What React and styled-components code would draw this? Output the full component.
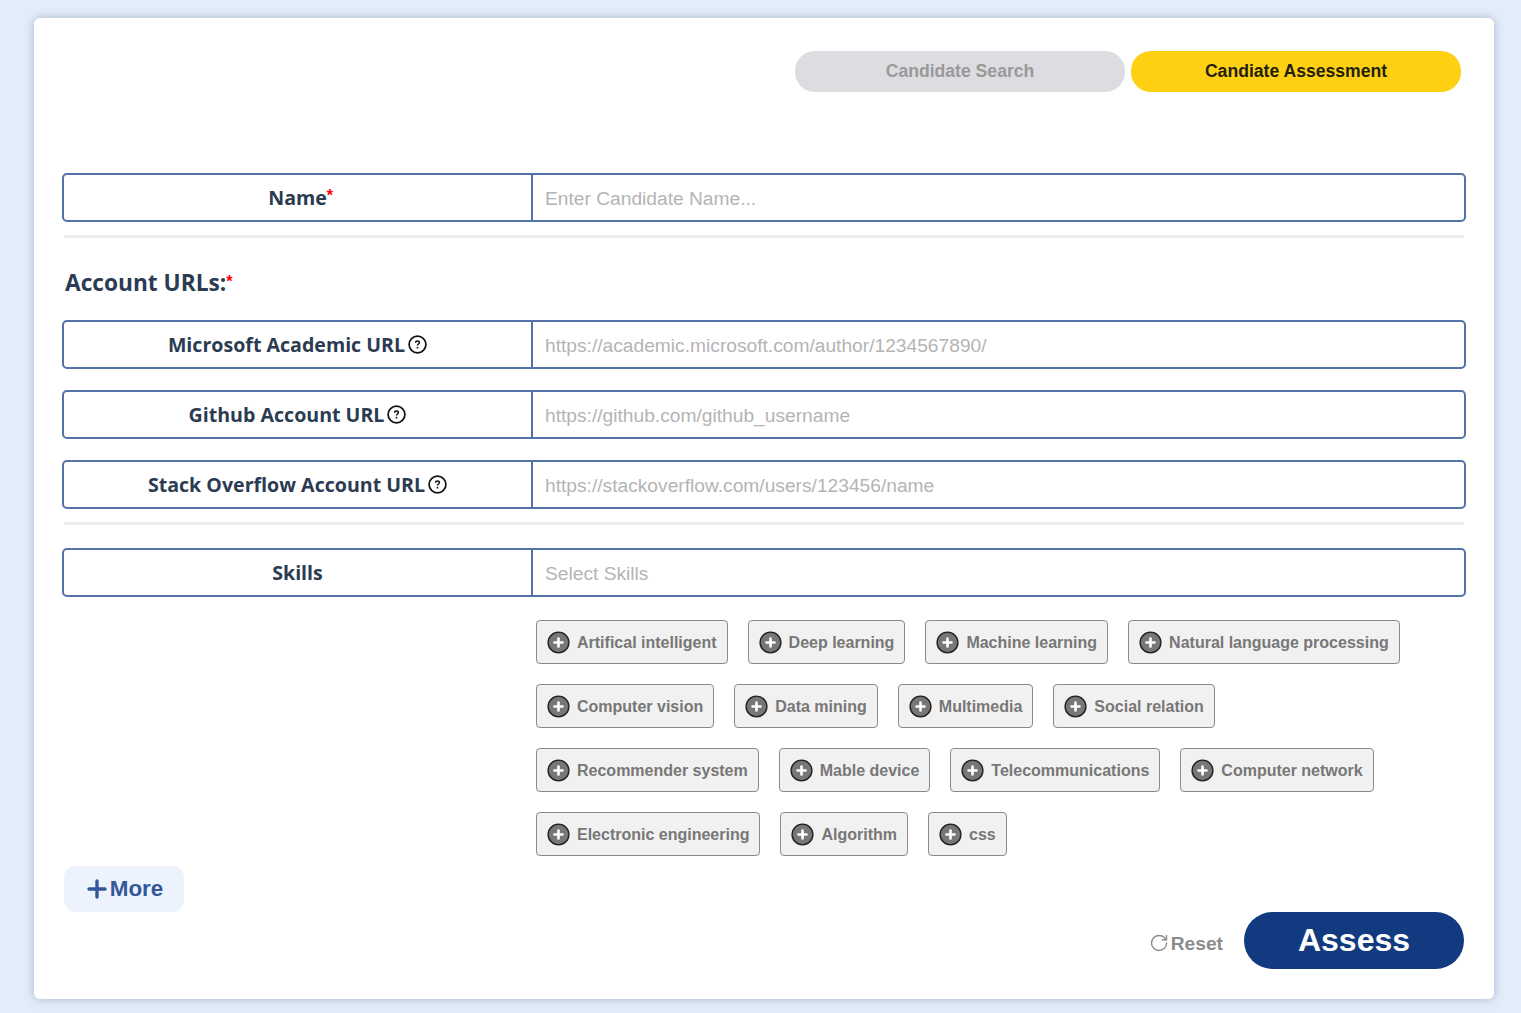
import React from 'react';
import styled, { createGlobalStyle } from 'styled-components';
import { RotateCw } from 'lucide-react';

const GlobalStyle = createGlobalStyle`
  * {
    box-sizing: border-box;
  }
  html, body {
    margin: 0;
    padding: 0;
    background: #e3edf9;
    font-family: "Liberation Sans", Arial, sans-serif;
  }
`;

const Page = styled.div`
  min-height: 1013px;
  padding: 18px 27px 14px 34px;
`;

const Card = styled.div`
  height: 981px;
  padding: 33px 28px 0;
  background: #fff;
  border-radius: 6px;
  box-shadow: 0 0 10px rgba(60, 80, 120, 0.35);
`;

const Nav = styled.div`
  display: flex;
  justify-content: flex-end;
  gap: 6px;
  padding-right: 5px;
  margin-bottom: 81px;
`;

const NavButton = styled.button`
  width: 330px;
  height: 41px;
  padding: 0;
  border: none;
  border-radius: 20px;
  background: ${props => (props.active ? '#ffd011' : '#dcdde0')};
  color: ${props => (props.active ? '#231f10' : '#999')};
  font-family: inherit;
  font-size: 17.6px;
  font-weight: 700;
`;

const Row = styled.div`
  display: flex;
  height: 49px;
  margin-bottom: ${props => props.gap || 21}px;
  border: 2px solid #5272a8;
  border-radius: 5px;
`;

const RowLabel = styled.label`
  display: flex;
  align-items: center;
  justify-content: center;
  flex: none;
  width: 469px;
  border-right: 2px solid #5272a8;
  color: #2b3b52;
  font-family: "Open Sans", "Noto Sans", sans-serif;
  font-size: 19.6px;
  font-weight: 700;
`;

const Required = styled.span`
  align-self: flex-start;
  width: 7px;
  margin-top: ${props => props.top}px;
  margin-right: ${props => (props.overhang ? -7 : 0)}px;
  color: #f00;
  font-family: "Liberation Sans", Arial, sans-serif;
  font-size: 16px;
  font-weight: 700;
  line-height: 1;
`;

const RowInput = styled.input`
  flex: 1;
  min-width: 0;
  padding: 2px 12px 0;
  border: none;
  outline: none;
  background: transparent;
  font-family: "Liberation Sans", Arial, sans-serif;
  font-size: 19.2px;
  color: #333;

  &::placeholder {
    color: #b4b4b4;
    opacity: 1;
  }
`;

const Divider = styled.div`
  height: 3px;
  margin: 0 2px ${props => props.after}px;
  background: #eeeeee;
`;

const SectionTitle = styled.h2`
  display: flex;
  height: 32px;
  margin: 0 0 21px 3px;
  color: #2b3b52;
  font-family: "Open Sans", "Noto Sans", sans-serif;
  font-size: 22.7px;
  font-weight: 700;
  line-height: 32px;
`;

const HelpIcon = styled.svg`
  flex: none;
  width: 19px;
  height: 19px;
  margin-left: 3px;
`;

const ChipList = styled.div`
  display: flex;
  flex-wrap: wrap;
  gap: 20px;
  max-width: 900px;
  margin-left: 474px;
`;

const Chip = styled.button`
  display: flex;
  align-items: center;
  gap: 7px;
  height: 44px;
  padding: 0 10px;
  border: 1px solid #8a8a8a;
  border-radius: 4px;
  background: #f1f1f1;
  color: #777;
  font-family: inherit;
  font-size: 16px;
  font-weight: 700;
`;

const ChipText = styled.span`
  padding-top: 2px;
`;

const ChipIcon = styled.svg`
  flex: none;
  width: 23px;
  height: 23px;
`;

const MoreButton = styled.button`
  display: flex;
  align-items: center;
  justify-content: center;
  gap: 3px;
  width: 120px;
  height: 46px;
  margin: 10px 0 0 2px;
  padding: 0 0 1px 2px;
  border: none;
  border-radius: 12px;
  background: #ecf3fd;
  color: #34579a;
  font-family: inherit;
  font-size: 22.4px;
  font-weight: 700;
`;

const MoreIcon = styled.svg`
  width: 20px;
  height: 20px;
`;

const Actions = styled.div`
  display: flex;
  align-items: center;
  justify-content: flex-end;
  gap: 21px;
  padding-right: 2px;
`;

const ResetButton = styled.button`
  display: flex;
  align-items: center;
  gap: 2px;
  margin-top: 7px;
  padding: 0;
  border: none;
  background: none;
  color: #8c8c8c;
  font-family: inherit;
  font-size: 19.2px;
  font-weight: 700;

  svg {
    margin-top: -2px;
  }
`;

const AssessButton = styled.button`
  width: 220px;
  height: 57px;
  padding: 0;
  border: none;
  border-radius: 29px;
  background: #123a80;
  color: #fff;
  font-family: inherit;
  font-size: 32px;
  font-weight: 700;
`;

const skills = [
  'Artifical intelligent',
  'Deep learning',
  'Machine learning',
  'Natural language processing',
  'Computer vision',
  'Data mining',
  'Multimedia',
  'Social relation',
  'Recommender system',
  'Mable device',
  'Telecommunications',
  'Computer network',
  'Electronic engineering',
  'Algorithm',
  'css',
];

const urlFields = [
  { label: 'Microsoft Academic URL', placeholder: 'https://academic.microsoft.com/author/1234567890/' },
  { label: 'Github Account URL', placeholder: 'https://github.com/github_username' },
  { label: 'Stack Overflow Account URL', placeholder: 'https://stackoverflow.com/users/123456/name', gap: 13 },
];

const Help = () => (
  <HelpIcon viewBox="0 0 19 19" fill="none">
    <circle cx="9.5" cy="9.5" r="8.4" stroke="#111" strokeWidth="1.7" />
    <path
      d="M7.6 7.7c0-1.1.8-1.7 1.9-1.7s1.9.6 1.9 1.6c0 1.4-1.9 1.4-1.9 2.8"
      stroke="#111"
      strokeWidth="1.5"
    />
    <circle cx="9.5" cy="12.7" r="0.9" fill="#111" />
  </HelpIcon>
);

const PlusCircle = () => (
  <ChipIcon viewBox="0 0 23 23">
    <circle cx="11.5" cy="11.5" r="10.4" fill="#777" stroke="#222" strokeWidth="1.4" />
    <path d="M11.5 7.5v8M7.5 11.5h8" stroke="#fff" strokeWidth="2.6" strokeLinecap="round" />
  </ChipIcon>
);

const App = () => {
  return (
    <Page>
      <GlobalStyle />
      <Card>
        <Nav>
          <NavButton>Candidate Search</NavButton>
          <NavButton active>Candiate Assessment</NavButton>
        </Nav>

        <Row gap={13}>
          <RowLabel>
            Name<Required top={13} overhang>*</Required>
          </RowLabel>
          <RowInput placeholder="Enter Candidate Name..." />
        </Row>
        <Divider after={29} />

        <SectionTitle>
          Account URLs:<Required top={7}>*</Required>
        </SectionTitle>

        {urlFields.map(field => (
          <Row key={field.label} gap={field.gap}>
            <RowLabel>
              {field.label}
              <Help />
            </RowLabel>
            <RowInput placeholder={field.placeholder} />
          </Row>
        ))}
        <Divider after={23} />

        <Row gap={23}>
          <RowLabel>Skills</RowLabel>
          <RowInput placeholder="Select Skills" />
        </Row>

        <ChipList>
          {skills.map(skill => (
            <Chip key={skill}>
              <PlusCircle />
              <ChipText>{skill}</ChipText>
            </Chip>
          ))}
        </ChipList>

        <MoreButton>
          <MoreIcon viewBox="0 0 20 20">
            <path d="M10 2v16M2 10h16" stroke="#34579a" strokeWidth="3.4" strokeLinecap="round" />
          </MoreIcon>
          More
        </MoreButton>

        <Actions>
          <ResetButton>
            <RotateCw size={20} strokeWidth={1.7} />
            Reset
          </ResetButton>
          <AssessButton>Assess</AssessButton>
        </Actions>
      </Card>
    </Page>
  );
};

export default App;
